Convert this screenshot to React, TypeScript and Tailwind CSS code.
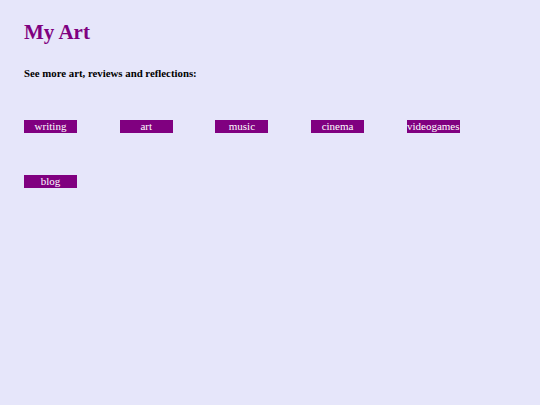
const links = ['writing', 'art', 'music', 'cinema', 'videogames', 'blog']

export default function App() {
  return (
    <div className="min-h-[405px] bg-[#e6e6fa] px-6 pt-[19px] font-['Liberation_Serif',serif]">
      <h1 className="text-[21px] font-bold leading-[26px] text-[#800080]">My Art</h1>
      <p className="mt-[21px] text-[10.8px] font-bold leading-[14px] text-black">
        See more art, reviews and reflections:
      </p>
      <div className="mt-[40px] grid grid-cols-[repeat(5,95.7px)] gap-y-[42px]">
        {links.map((l) => (
          <a
            key={l}
            href="#"
            className="block h-[13px] w-[53px] bg-[#800080] text-center text-[11px] leading-[13px] text-white"
          >
            {l}
          </a>
        ))}
      </div>
    </div>
  )
}
